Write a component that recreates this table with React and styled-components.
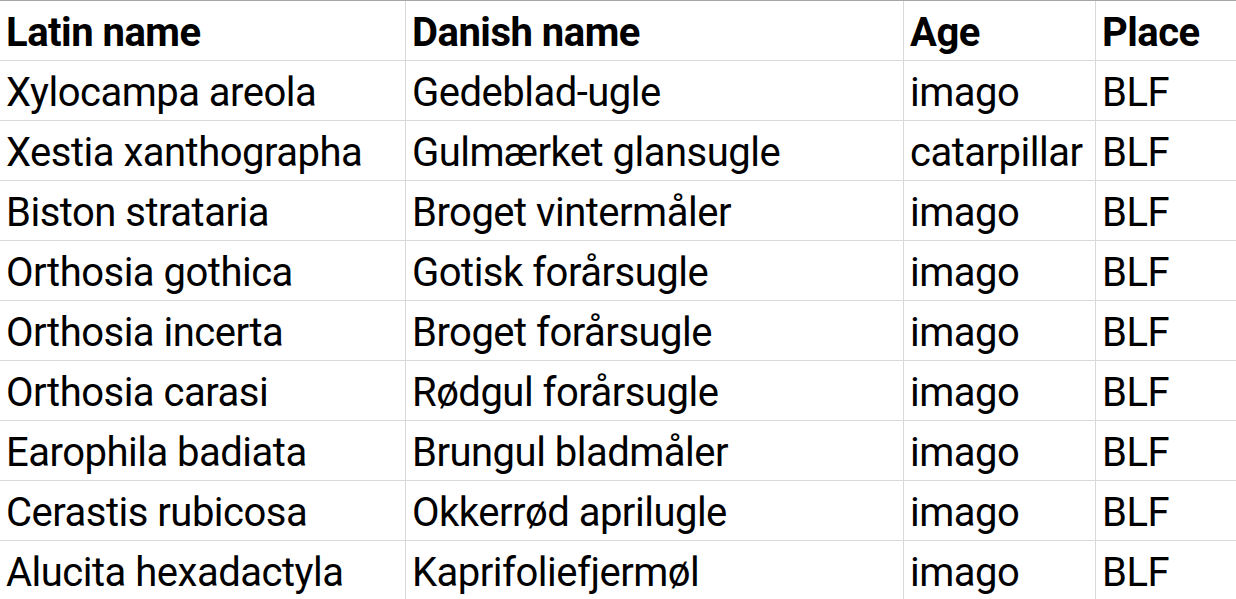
import React from "react";
import styled, { createGlobalStyle } from "styled-components";

const GlobalStyle = createGlobalStyle`
  body {
    margin: 0;
    background: #ffffff;
    overflow: hidden;
  }
`;

const Sheet = styled.div`
  width: 1236px;
  height: 599px;
  overflow: hidden;
  border-top: 1px solid #a6a6a6;
  box-sizing: border-box;
`;

const Grid = styled.div`
  display: grid;
  grid-template-columns: 406px 498px 192px 160px;
  grid-auto-rows: 60px;
  font-family: Roboto, "Liberation Sans", sans-serif;
  font-variant-ligatures: none;
  color: #000;
`;

const Cell = styled.div`
  display: flex;
  align-items: flex-end;
  padding: 0 0 7px 6px;
  box-sizing: border-box;
  border-right: 1px solid #d9d9d9;
  border-bottom: 1px solid #d9d9d9;
  font-size: 40px;
  letter-spacing: -0.5px;
  font-weight: ${(p) => (p.$head ? 700 : 400)};
  white-space: nowrap;
  overflow: hidden;
  line-height: 1;
`;

const rows = [
  ["Xylocampa areola", "Gedeblad-ugle", "imago", "BLF"],
  ["Xestia xanthographa", "Gulmærket glansugle", "catarpillar", "BLF"],
  ["Biston strataria", "Broget vintermåler", "imago", "BLF"],
  ["Orthosia gothica", "Gotisk forårsugle", "imago", "BLF"],
  ["Orthosia incerta", "Broget forårsugle", "imago", "BLF"],
  ["Orthosia carasi", "Rødgul forårsugle", "imago", "BLF"],
  ["Earophila badiata", "Brungul bladmåler", "imago", "BLF"],
  ["Cerastis rubicosa", "Okkerrød aprilugle", "imago", "BLF"],
  ["Alucita hexadactyla", "Kaprifoliefjermøl", "imago", "BLF"],
];

const App = () => {
  return (
    <>
      <GlobalStyle />
      <Sheet>
        <Grid>
          {["Latin name", "Danish name", "Age", "Place"].map((h) => (
            <Cell key={h} $head>
              {h}
            </Cell>
          ))}
          {rows.map((r, i) =>
            r.map((c, j) => <Cell key={`${i}-${j}`}>{c}</Cell>)
          )}
        </Grid>
      </Sheet>
    </>
  );
};

export default App;
